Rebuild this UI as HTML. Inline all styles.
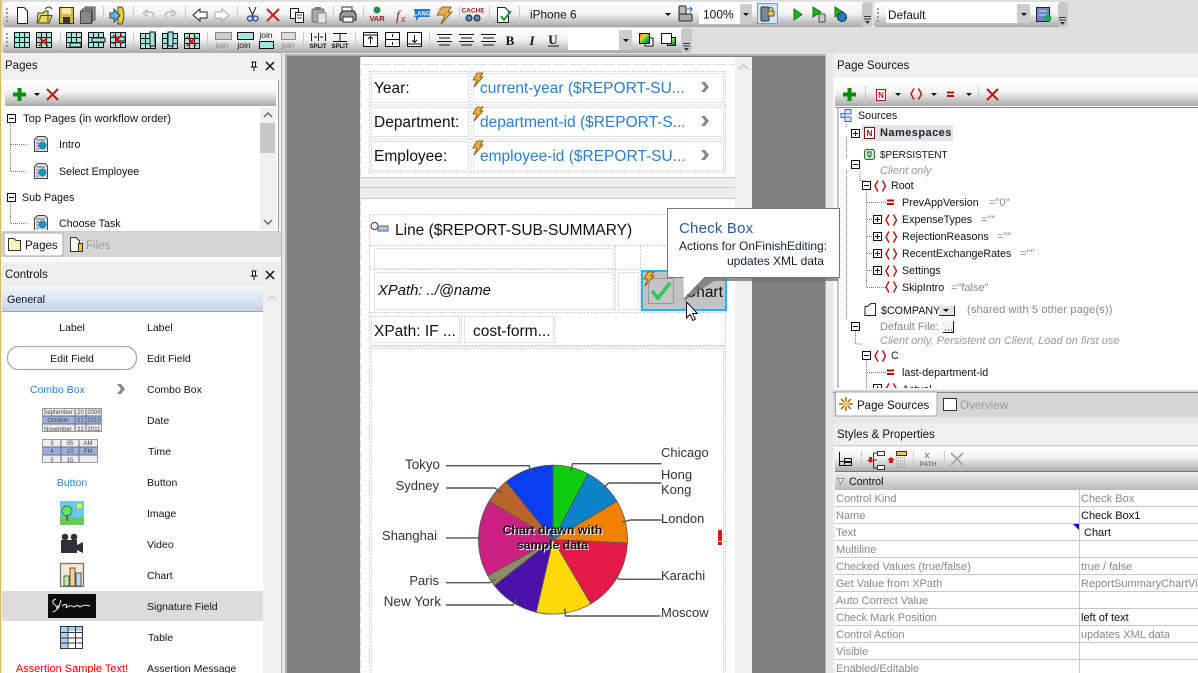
<!DOCTYPE html>
<html><head><meta charset="utf-8"><style>
html,body{margin:0;padding:0;width:1198px;height:673px;overflow:hidden;background:#dfdfdf}
svg{display:block;position:absolute;left:0;top:0}
text{font-family:"Liberation Sans",sans-serif;font-size:11px;fill:#111;white-space:pre}
.t{font-size:10.7px;fill:#112}
.h{font-size:11.5px;fill:#112}
.g{fill:#888}
.gi{fill:#999;font-style:italic}
.f{font-size:15.5px;fill:#111}
.b{font-size:15.5px;fill:#2a7fd0}
.c{font-size:13px;fill:#333}
.m{text-anchor:middle}
.e{text-anchor:end}
.s{font-size:8px;font-weight:bold;text-anchor:middle}
.p{fill:#888}
.l{font-size:10.5px;fill:#112}
.w{font-size:6px;fill:#444;text-anchor:middle}
</style></head><body>
<svg width="1198" height="673" viewBox="0 0 1198 673" xmlns="http://www.w3.org/2000/svg">
<defs>
<linearGradient id="tg" x1="0" y1="0" x2="0" y2="1"><stop offset="0" stop-color="#fff"/><stop offset=".45" stop-color="#f4f4f4"/><stop offset="1" stop-color="#a8a8a8"/></linearGradient>
<linearGradient id="hg" x1="0" y1="0" x2="0" y2="1"><stop offset="0" stop-color="#fff"/><stop offset=".4" stop-color="#f5f5f5"/><stop offset="1" stop-color="#aaa"/></linearGradient>
<linearGradient id="gen" x1="0" y1="0" x2="0" y2="1"><stop offset="0" stop-color="#f2f6fa"/><stop offset="1" stop-color="#c4d4e6"/></linearGradient>
<linearGradient id="cg" x1="0" y1="0" x2="0" y2="1"><stop offset="0" stop-color="#eee"/><stop offset="1" stop-color="#bbb"/></linearGradient>
<linearGradient id="rb" x1="0" y1="0" x2="1" y2="1"><stop offset="0" stop-color="#f03030"/><stop offset=".33" stop-color="#f0e020"/><stop offset=".66" stop-color="#20c040"/><stop offset="1" stop-color="#2040f0"/></linearGradient>
<g id="tb"><rect x=".5" y=".5" width="15" height="15" fill="#9fe8e0" stroke="#111"/><path d="M.5 5.5H15.5M.5 10.5H15.5M5.5 .5V15.5M10.5 .5V15.5" stroke="#111" fill="none"/></g>
<g id="xs"><path d="M0 0L9 9M9 0L0 9" stroke="#d01010" stroke-width="1.6" fill="none"/></g>
<g id="xb"><path d="M1 1L12 12M12 1L1 12" stroke="#b81818" stroke-width="2" fill="none"/></g>
<g id="pl"><path d="M6.5 0V13M0 6.5H13" stroke="#0c8c0c" stroke-width="4" fill="none"/></g>
<g id="bp"><rect x=".5" y=".5" width="8" height="8" fill="#fff" stroke="#111"/><path d="M2 4.5H7M4.5 2V7" stroke="#111"/></g>
<g id="bm"><rect x=".5" y=".5" width="8" height="8" fill="#fff" stroke="#111"/><path d="M2 4.5H7" stroke="#111"/></g>
<g id="br"><path d="M4 .5L1 6L4 11.5M8.5 .5L11.5 6L8.5 11.5" stroke="#c01818" stroke-width="1.5" fill="none"/></g>
<g id="eq"><path d="M0 1.5H7M0 5H7" stroke="#b80808" stroke-width="2"/></g>
<g id="dn"><path d="M0 0H6L3 3Z" fill="#111"/></g>
<g id="pg"><path d="M3.5 .5H11L13.500 3V15.500H.5V3.500Z" fill="#e0e0e0" stroke="#444"/><path d="M2.500 4H11M2.500 7H5M2.500 10H5M2.500 13H5" stroke="#666"/><circle cx="8.500" cy="9.500" r="4" fill="#1a8ac8"/><path d="M8 7L10 9L8 12" stroke="#0b5" fill="none"/></g>
<g id="bolt"><path d="M5 0L11 0L8 4L11 4L2 14L5 7L1 7Z" fill="#f0b040" stroke="#7a4a10" stroke-width=".8"/></g>
<g id="chev"><path d="M0 0L4 0L8 5L4 10L0 10L4 5Z" fill="#888"/></g>
<g id="grip"><path d="M0 .5H7M0 3H7" stroke="#333"/><path d="M1 5H6L3.5 8Z" fill="#333"/></g>
<g id="lin"><path d="M0 .5H15M2 4H13M0 7.5H15M2 11H13" stroke="#111" fill="none"/></g>
</defs>

<rect width="1198" height="673" fill="#dfdfdf"/>
<rect x="0" y="0" width="1" height="673" fill="#e3b263"/>

<!-- toolbars -->
<rect x="3" y="2" width="869" height="25" rx="3" fill="url(#tg)"/>
<rect x="3" y="28" width="689" height="25" rx="3" fill="url(#tg)"/>
<rect x="874" y="2" width="194" height="25" rx="3" fill="url(#tg)"/>
<rect x="862" y="2" width="10" height="25" rx="3" fill="#c8c8c8"/>
<rect x="681" y="28" width="11" height="25" rx="3" fill="#c8c8c8"/>
<rect x="1058" y="2" width="10" height="25" rx="3" fill="#c8c8c8"/>
<path d="M7 8v2M7 12v2M7 16v2M7 20v2M7 33v2M7 37v2M7 41v2M7 45v2M878 8v2M878 12v2M878 16v2M878 20v2" stroke="#999" stroke-width="2"/>
<use href="#grip" x="864" y="16"/><use href="#grip" x="683" y="43"/><use href="#grip" x="1059" y="17"/>
<path d="M103.500 6V24M133.500 6V24M185.500 6V24M237.500 6V24M333.500 6V24M363.500 6V24M459.500 6V24M489.500 6V24M519.500 6V24M60.500 32V50M133.500 32V50M207.500 32V50M303.500 32V50M355.500 32V50M429.500 32V50" stroke="#c8c8c8"/>

<!-- row 1 icons -->
<path d="M17.500 7.500H24L27.500 11V23.500H17.500Z" fill="#fff" stroke="#222"/>
<path d="M37 23L38 13H43L45 11H48V23Z M38 23L41 15.500H52L49 23Z" fill="#e8d860" stroke="#443"/><path d="M45 9Q49 5 52 9" stroke="#333" fill="none"/>
<rect x="59.500" y="7.500" width="14" height="16" fill="#d8b840" stroke="#333"/><rect x="62" y="8" width="9" height="6" fill="#f6e8a0"/><rect x="63" y="17" width="7" height="6" fill="#333"/>
<rect x="85" y="7" width="10" height="13" fill="#999" stroke="#555"/><rect x="82.500" y="9" width="10" height="13" fill="#aaa" stroke="#555"/><rect x="80.500" y="11" width="11" height="12.500" fill="#888" stroke="#444"/>
<path d="M118 7H122Q126 14 122 24H118Z" fill="#f0d020" stroke="#444"/><path d="M110 13H114V9L120 15.500L114 22V18H110Z" fill="#60b8f0" stroke="#245"/>
<path d="M143 13L147 10V12H151Q155 13 153 18M143 13L147 16V14" stroke="#bbb" stroke-width="1.500" fill="none"/><path d="M176 13L172 10V12H168Q164 13 166 18M176 13L172 16V14" stroke="#bbb" stroke-width="1.500" fill="none"/>
<path d="M193 15L200 9V12H207V18H200V21Z" fill="#fff" stroke="#222"/><path d="M229 15L222 9V12H215V18H222V21Z" fill="#fff" stroke="#aaa"/>
<path d="M249 7L253 16M256 7L252 16" stroke="#222"/><circle cx="250" cy="18.500" r="2.500" fill="none" stroke="#2244aa" stroke-width="1.300"/><circle cx="255.500" cy="18.500" r="2.500" fill="none" stroke="#2244aa" stroke-width="1.300"/>
<path d="M267 9L279 21M279 9L267 21" stroke="#c82020" stroke-width="2"/>
<rect x="290.500" y="8.500" width="8" height="10" fill="#fff" stroke="#123"/><rect x="295.500" y="12.500" width="8" height="10" fill="#fff" stroke="#123"/><path d="M297 15H302M297 18H302" stroke="#124a90"/>
<rect x="312" y="9" width="12" height="13" rx="1.500" fill="#a8a8a8" stroke="#666"/><rect x="318" y="13" width="8" height="10" fill="#e6e6e6" stroke="#888"/><rect x="315" y="7" width="6" height="3" fill="#777"/>
<rect x="342" y="7" width="10" height="6" fill="#fff" stroke="#333"/><path d="M340 14L343 11H354L356 14V20H340Z" fill="#999" stroke="#222"/><rect x="343" y="17" width="10" height="5" fill="#fff" stroke="#333"/>
<circle cx="377" cy="10" r="3.500" fill="#2c8c48"/><text x="377" y="21" class="s" style="fill:#a01818;font-size:7.500px">VAR</text>
<text x="396" y="20" style="font-family:'Liberation Serif',serif;font-style:italic;font-size:14px;fill:#a01818">f</text><text x="401" y="22" style="font-size:9px;fill:#c02020">x</text>
<path d="M414 9H430V17H419L416 21V17H414Z" fill="#1c78d0"/><text x="422" y="15.500" class="s" style="fill:#fff;font-size:6px">LANG</text>
<path d="M442 7L451 7L448 12L452 12L441 24L445 15L437 15Z" fill="#eab050" stroke="#8a6030"/><path d="M437 9L441 7L439 12Z" fill="#d0d0d0"/>
<text x="473" y="12.500" class="s" style="fill:#a02020;font-size:6.500px">CACHE</text><circle cx="469" cy="18" r="3" fill="#5a88c8" stroke="#222"/><circle cx="477" cy="18" r="3" fill="#5a88c8" stroke="#222"/>
<path d="M497.500 7.500H505L508.500 11V22.500H497.500Z" fill="#fff" stroke="#222"/><path d="M501 16L504 20L511 11" stroke="#18a030" stroke-width="2" fill="none"/>
<text x="530" y="18.500" style="font-size:11.800px;fill:#112">iPhone 6</text><use href="#dn" x="665" y="13"/>
<rect x="679" y="6" width="7" height="9" rx="1" fill="#bbb" stroke="#222"/><rect x="679" y="14" width="13" height="7" rx="1" fill="#aaa" stroke="#222"/><path d="M687 9H692L690 7M692 9L690 12" stroke="#2060d0" fill="none"/>
<rect x="699" y="4" width="53" height="20" fill="#fff"/><rect x="740" y="4" width="12" height="20" fill="#ccc"/>
<text x="703" y="18.500" style="font-size:12px;fill:#112">100%</text><use href="#dn" x="743" y="13"/>
<rect x="757.500" y="3.500" width="20" height="20" fill="#cfe4fa" stroke="#5aa0e8"/><rect x="761" y="7" width="8" height="14" rx="1.500" fill="#789" stroke="#234"/><rect x="768" y="11" width="6" height="5" fill="#eec040" stroke="#654"/><path d="M769 11V9Q771 6 773 9V11" stroke="#654" fill="none"/>
<path d="M794 9L802 14.500L794 20Z" fill="#20b020" stroke="#0a7a0a"/>
<path d="M813 7L821 12L813 17Z" fill="#20b020" stroke="#0a7a0a"/><rect x="819" y="14" width="6" height="8" rx="1" fill="#ccc" stroke="#444"/>
<path d="M835 7L843 12L835 17Z" fill="#20b020" stroke="#0a7a0a"/><circle cx="842" cy="17" r="4.500" fill="#1a80c0" stroke="#124"/>
<rect x="886" y="4" width="144" height="19" fill="#fff"/><rect x="1017" y="4" width="13" height="19" fill="#ccc"/>
<text x="888" y="19" style="font-size:11.800px;fill:#112">Default</text><use href="#dn" x="1021" y="13"/>
<rect x="1036.500" y="7.500" width="13" height="14" fill="#6888c0" stroke="#223"/><path d="M1039 11H1047M1039 15H1047" stroke="#dde"/><circle cx="1048" cy="18" r="3.500" fill="#20a050"/>

<!-- row 2 icons -->
<use href="#tb" x="14" y="32"/><use href="#tb" x="36" y="32"/><use href="#xs" x="39" y="37"/>
<use href="#tb" x="66" y="32"/><rect x="70" y="43" width="11" height="4" fill="#9fe8e0" stroke="#111"/>
<use href="#tb" x="88" y="32"/><rect x="92" y="38" width="13" height="4" fill="#9fe8e0" stroke="#111"/>
<use href="#tb" x="110" y="32"/><rect x="116" y="37" width="9" height="4" fill="#9fe8e0" stroke="#111"/><use href="#xs" x="113" y="35"/>
<use href="#tb" x="140" y="33"/><rect x="150" y="32" width="5" height="14" fill="#9fe8e0" stroke="#111"/>
<use href="#tb" x="162" y="33"/><rect x="168" y="32" width="5" height="14" fill="#9fe8e0" stroke="#111"/>
<use href="#tb" x="184" y="33"/><use href="#xs" x="187" y="37"/>
<rect x="215.500" y="32.500" width="16" height="7" fill="#ccc" stroke="#888"/><text x="222" y="48" class="m" style="font-size:8.500px;fill:#888">join</text>
<rect x="237.500" y="32.500" width="16" height="7" fill="#9fe8e0" stroke="#111"/><text x="244" y="48" class="m" style="font-size:8.500px">join</text>
<rect x="259.500" y="41.500" width="14" height="7" fill="#9fe8e0" stroke="#111"/><text x="266" y="38" class="m" style="font-size:8.500px">join</text>
<rect x="281.500" y="32.500" width="14" height="7" fill="#ddd" stroke="#888"/><text x="288" y="48" class="m" style="font-size:8.500px;fill:#888">join</text>
<path d="M311.500 33V41M325.500 33V41M318.500 33V41M314 37H317M320 37H323" stroke="#111"/><text x="318" y="48" class="s" style="font-size:6px">SPLIT</text>
<path d="M333 33.500H347M333 41.500H347M340 33V41" stroke="#111"/><text x="340" y="48" class="s" style="font-size:6px">SPLIT</text>
<rect x="363.500" y="32.500" width="14" height="14" fill="#fff" stroke="#111"/><path d="M364 35H377M370.500 44V37M368 39L370.500 36.500L373 39" stroke="#111" fill="none"/>
<rect x="385.500" y="32.500" width="14" height="14" fill="#fff" stroke="#111"/><path d="M386 39.500H399M392.500 34V37M392.500 42V45" stroke="#111"/>
<rect x="407.500" y="32.500" width="14" height="14" fill="#fff" stroke="#111"/><path d="M408 44H421M414.500 35V42M412 40L414.500 42.500L417 40" stroke="#111" fill="none"/>
<use href="#lin" x="437" y="34"/><use href="#lin" x="459" y="34"/><use href="#lin" x="481" y="34"/>
<text x="510" y="45" class="m" style="font-family:'Liberation Serif',serif;font-weight:bold;font-size:13px">B</text>
<text x="532" y="45" class="m" style="font-family:'Liberation Serif',serif;font-weight:bold;font-style:italic;font-size:13px">I</text>
<text x="553" y="44" class="m" style="font-family:'Liberation Serif',serif;font-weight:bold;font-size:13px">U</text><path d="M548 46H559" stroke="#111"/>
<rect x="568" y="30" width="64" height="20" fill="#fff"/><rect x="619" y="30" width="13" height="20" fill="#ccc"/><use href="#dn" x="623" y="39"/>
<rect x="645" y="38" width="8" height="8" fill="#fff" stroke="#111"/><rect x="639.500" y="33.500" width="10" height="10" fill="url(#rb)" stroke="#111"/>
<rect x="667.500" y="37.500" width="8" height="8" fill="url(#rb)" stroke="#111"/><rect x="661.500" y="33.500" width="10" height="10" fill="#fff" stroke="#111"/>

<!-- Left panel -->
<rect x="1" y="53" width="280" height="620" fill="#f0f0f0"/>
<path d="M281.500 54V673" stroke="#bbb"/>
<text x="5" y="69" class="h">Pages</text>
<path d="M251.500 62H256.500M252.500 62V67H255.500V62M254 67V71M250.500 67H257.500" stroke="#111" fill="none"/>
<path d="M266 62L274 70M274 62L266 70" stroke="#111" stroke-width="1.500"/>
<rect x="2" y="80" width="277" height="153" fill="#fff"/>
<path d="M278.500 80V232H2" stroke="#999" fill="none"/>
<rect x="5" y="82" width="271" height="24" fill="url(#hg)"/>
<use href="#pl" x="13" y="88"/><use href="#dn" x="34" y="93"/><use href="#xb" x="46" y="88"/>
<rect x="260" y="107" width="16" height="123" fill="#f0f0f0"/><rect x="260" y="123" width="15" height="30" fill="#c8c8c8"/>
<path d="M264 117L268 113L272 117M264 220L268 224L272 220" stroke="#666" stroke-width="1.500" fill="none"/>
<use href="#bm" x="7" y="114"/><text x="23" y="122" style="font-size:11.200px;fill:#112">Top Pages (in workflow order)</text>
<path d="M10.500 124V171.500H27M11 144.500H27M10.500 202V223.500H27" stroke="#777" stroke-dasharray="1 1" fill="none"/>
<use href="#pg" x="34" y="136"/><text x="59" y="148" class="t">Intro</text>
<use href="#pg" x="34" y="163"/><text x="59" y="175" class="t">Select Employee</text>
<use href="#bm" x="7" y="193"/><text x="22" y="201" class="t">Sub Pages</text>
<svg x="0" y="100" width="259" height="130"><use href="#pg" x="34" y="115"/></svg>
<text x="59" y="227" class="t">Choose Task</text>
<rect x="1" y="232" width="280" height="25" fill="#d6d6d6"/>
<path d="M4 233H63V253Q63 256 60 256H7Q4 256 4 253Z" fill="#fff" stroke="#aaa"/>
<path d="M8.500 238.500H14L16 240.500H20.500V250.500H8.500Z" fill="#fdf6c0" stroke="#333"/>
<text x="25" y="249" class="h">Pages</text>
<path d="M70.500 237.500H76L79.500 241V251.500H70.500Z" fill="#fff" stroke="#333"/><rect x="78.500" y="243.500" width="4" height="8" fill="#f0c040" stroke="#333"/>
<text x="86" y="249" class="h" style="fill:#999">Files</text>
<rect x="1" y="257" width="280" height="5" fill="#fafafa"/>
<rect x="1" y="262" width="280" height="24" fill="#efefef"/>
<text x="5" y="278" class="h">Controls</text>
<path d="M251.500 271H256.500M252.500 271V276H255.500V271M254 276V280M250.500 276H257.500" stroke="#111" fill="none"/>
<path d="M266 271L274 279M274 271L266 279" stroke="#111" stroke-width="1.500"/>
<rect x="2" y="287" width="261" height="25" fill="url(#gen)"/><path d="M2 311.500H263" stroke="#9aa4b0"/>
<text x="7" y="303" class="t">General</text>
<rect x="2" y="312" width="261" height="361" fill="#fff"/>
<rect x="263" y="287" width="17" height="386" fill="#f0f0f0"/>
<path d="M268 300L272 296L276 300" stroke="#ccc" stroke-width="1.500" fill="none"/>
<rect x="2" y="591" width="261" height="30" fill="#dcdcdc"/>
<text x="72" y="331" class="m l">Label</text><text x="147" y="331" class="l">Label</text>
<rect x="7.500" y="346.500" width="129" height="23" rx="11" fill="#fff" stroke="#aaa" stroke-width="1.300"/><text x="72" y="362" class="m l">Edit Field</text><text x="147" y="362" class="l">Edit Field</text>
<text x="30" y="393" class="l" style="fill:#2a7fd0">Combo Box</text><use href="#chev" x="117" y="384"/><text x="147" y="393" class="l">Combo Box</text>
<rect x="42.500" y="408.500" width="59" height="23" fill="#eee" stroke="#999"/><rect x="43" y="416" width="58" height="8" fill="#9cb0dc"/><path d="M43 416H101M43 424H101M75 409V431M86 409V431" stroke="#668"/>
<text x="58" y="414" class="w">September</text><text x="58" y="422" class="w">October</text><text x="58" y="431" class="w">November</text><text x="80.500" y="414" class="w">20</text><text x="80.500" y="422" class="w">21</text><text x="80.500" y="431" class="w">22</text><text x="94" y="414" class="w">2009</text><text x="94" y="422" class="w">2010</text><text x="94" y="431" class="w">2011</text>
<text x="147" y="424" class="l">Date</text>
<rect x="42.500" y="439.500" width="55" height="23" fill="#eee" stroke="#999"/><rect x="43" y="447" width="54" height="8" fill="#9cb0dc"/><path d="M43 447H97M43 455H97M61 440V462M79 440V462" stroke="#668"/>
<text x="52" y="445" class="w">3</text><text x="52" y="453" class="w">4</text><text x="52" y="462" class="w">5</text><text x="70" y="445" class="w">05</text><text x="70" y="453" class="w">10</text><text x="70" y="462" class="w">15</text><text x="88" y="445" class="w">AM</text><text x="88" y="453" class="w">PM</text>
<text x="148" y="455" class="l">Time</text>
<text x="72" y="486" class="m l" style="fill:#2a7fd0">Button</text><text x="147" y="486" class="l">Button</text>
<rect x="60" y="501" width="24" height="24" fill="#6cc8ec"/><rect x="60" y="517" width="24" height="8" fill="#66cc55"/><circle cx="79.500" cy="506" r="2.500" fill="#ff0"/><circle cx="67" cy="511" r="5" fill="#6ce060" stroke="#284"/><rect x="66.500" y="515" width="1.500" height="6" fill="#840"/><text x="147" y="517" class="l">Image</text>
<circle cx="65" cy="537" r="3.300" fill="#2c3038"/><circle cx="74" cy="537" r="3.300" fill="#2c3038"/><rect x="61" y="540" width="16" height="13" fill="#2c3038"/><path d="M77 545L83 542V553L77 550Z" fill="#2c3038"/><text x="147" y="548" class="l">Video</text>
<rect x="60.500" y="563.500" width="23" height="23" fill="#fbe8d0" stroke="#777" stroke-width="1.300"/><rect x="64" y="576" width="5" height="10" fill="#bff0a8" stroke="#555"/><rect x="70" y="568" width="5" height="18" fill="#fcd090" stroke="#555"/><rect x="76" y="573" width="5" height="13" fill="#b8d8f8" stroke="#555"/><text x="147" y="579" class="l">Chart</text>
<rect x="48" y="594" width="48" height="24" fill="#0c0c0c"/><path d="M56 599Q50 601 55 605Q60 609 53 612M58 605Q57 614 61 600M62 606Q68 602 66 608Q70 604 74 607Q78 604 80 607Q84 604 90 606" stroke="#eee" fill="none"/><text x="147" y="610" class="l">Signature Field</text>
<rect x="60.500" y="626.500" width="22" height="22" fill="#fff" stroke="#333"/><rect x="61" y="627" width="6" height="21" fill="#a8d0f4"/><rect x="61" y="627" width="21" height="4" fill="#a8d0f4"/><path d="M60 632.500H83M60 638H83M60 643H83M68 627V649M75.500 627V649" stroke="#333"/><text x="148" y="641" class="l">Table</text>
<text x="72" y="672" class="m" style="fill:#f00;font-size:11px">Assertion Sample Text!</text><text x="147" y="672" class="l">Assertion Message</text>

<!-- Centre -->
<rect x="283" y="53" width="550" height="620" fill="#e8e8e8"/>
<rect x="285" y="54" width="541" height="619" fill="#b0b0b0"/>
<rect x="287" y="56" width="538" height="617" fill="#808080"/>
<rect x="360" y="57" width="375" height="616" fill="#fff"/>
<rect x="735" y="57" width="17" height="616" fill="#f0f0f0"/>
<path d="M739 69L743.500 65L748 69" stroke="#ccc" stroke-width="2" fill="none"/>
<rect x="360" y="177" width="375" height="21" fill="#eeeef0"/><path d="M360 177.500H735M360 187.500H735M360 198.500H735" stroke="#ccc"/><path d="M360.500 57V177M360.500 198V673" stroke="#ddd" stroke-dasharray="8 3"/>
<path d="M362 64.500H735" stroke="#ddd" stroke-dasharray="12 4"/>
<g fill="none" stroke="#ccc" stroke-dasharray="2 1.500">
<rect x="369.500" y="71.500" width="356" height="101"/>
<path d="M370 105H725M370 139H725M471 72V172"/>
<rect x="369.500" y="214.500" width="356" height="131" />
<path d="M370 245.500H725M370 269.500H640M615.500 246V310M640.500 246V310M370 312.500H725M461.500 316V344M555 316V344"/>
<rect x="369.500" y="346.500" width="356" height="340"/>
</g>
<g fill="none" stroke="#e2e2e2">
<rect x="371.500" y="73.500" width="97" height="29"/><rect x="473.500" y="73.500" width="250" height="29"/>
<rect x="371.500" y="107.500" width="97" height="29"/><rect x="473.500" y="107.500" width="250" height="29"/>
<rect x="371.500" y="141.500" width="97" height="29"/><rect x="473.500" y="141.500" width="250" height="29"/>
<rect x="374.500" y="248.500" width="239" height="20"/><rect x="374.500" y="272.500" width="239" height="37"/><rect x="618.500" y="272.500" width="20" height="37"/>
<rect x="371.500" y="316.500" width="88" height="26"/><rect x="464.500" y="316.500" width="89" height="26"/><rect x="371.500" y="348.500" width="352" height="330"/>
</g>
<text x="374" y="93" class="f">Year:</text><text x="374" y="127" class="f">Department:</text><text x="374" y="161" class="f">Employee:</text>
<text x="480" y="93" class="b">current-year ($REPORT-SU...</text>
<text x="480" y="127" class="b">department-id ($REPORT-S...</text>
<text x="480" y="161" class="b">employee-id ($REPORT-SU...</text>
<use href="#bolt" x="472" y="73"/><use href="#bolt" x="472" y="107"/><use href="#bolt" x="472" y="141"/>
<use href="#chev" x="701" y="82"/><use href="#chev" x="701" y="116"/><use href="#chev" x="701" y="150"/>
<circle cx="374.500" cy="226" r="3.500" fill="#fff" stroke="#333"/><rect x="378" y="226" width="10" height="5" fill="#a8c8f0" stroke="#666"/>
<text x="395" y="235" class="f">Line ($REPORT-SUB-SUMMARY)</text>
<text x="378" y="295" class="f" style="font-style:italic;font-size:14.800px">XPath: ../@name</text>
<text x="374" y="336" class="f">XPath: IF ...</text><text x="473" y="336" class="f">cost-form...</text>

<!-- check box -->
<rect x="642" y="271" width="84" height="39" fill="#c2c2c2" stroke="#1db8e8" stroke-width="2"/>
<rect x="648.500" y="278.500" width="25" height="25" fill="#c4c4c4" stroke="#999"/>
<path d="M652 291L658 298L670 283" stroke="#2cc858" stroke-width="3.500" fill="none"/>
<text x="685" y="297" class="f">Chart</text>
<use href="#bolt" x="643" y="272"/>

<!-- pie -->
<g transform="translate(-1 0)">
<g stroke="#555" stroke-width=".8">
<path d="M554 539.600L554 465.100A74.500 74.500 0 0 1 589 473.800Z" fill="#0ccc0c"/>
<path d="M554 539.600L589 473.800A74.500 74.500 0 0 1 617.900 501.200Z" fill="#0a83c8"/>
<path d="M554 539.600L617.900 501.200A74.500 74.500 0 0 1 628.400 543Z" fill="#f08000"/>
<path d="M554 539.600L628.400 543A74.500 74.500 0 0 1 591.800 603.800Z" fill="#e51a48"/>
<path d="M554 539.600L591.800 603.800A74.500 74.500 0 0 1 537.200 612.200Z" fill="#ffd80a"/>
<path d="M554 539.600L537.200 612.200A74.500 74.500 0 0 1 495.300 585.500Z" fill="#4a12a8"/>
<path d="M554 539.600L495.300 585.500A74.500 74.500 0 0 1 488.800 575.700Z" fill="#8c8a6a"/>
<path d="M554 539.600L488.800 575.700A74.500 74.500 0 0 1 490.100 501.200Z" fill="#cc2080"/>
<path d="M554 539.600L490.100 501.200A74.500 74.500 0 0 1 507.100 481.700Z" fill="#b8642c"/>
<path d="M554 539.600L507.100 481.700A74.500 74.500 0 0 1 554 465.100Z" fill="#0a3cf0"/>
</g>
</g>
<g fill="none" stroke="#555" stroke-width="1.400">
<path d="M446 465.700H529L531 473"/><path d="M661.500 463.700H572.600L571 471"/><path d="M661.500 483H608.600L602.600 489"/><path d="M661.500 520H631L622 522"/><path d="M661.500 579.300H619.400L614 576"/><path d="M660.500 616H565.500L564.800 608.600"/><path d="M446 488H494.700L501.400 493"/><path d="M446 537.900H484"/><path d="M446 582.700H489.600L495.400 579.300"/><path d="M446 605H513L517 598.500"/>
</g>
<text x="440" y="469" class="e c" style="font-size:13.400px">Tokyo</text><text x="439" y="490" class="e c">Sydney</text><text x="437" y="540" class="e c">Shanghai</text><text x="439" y="585" class="e c">Paris</text><text x="441" y="606" class="e c" style="font-size:13.600px">New York</text>
<text x="661" y="457" class="c">Chicago</text><text x="661" y="479" class="c">Hong</text><text x="661" y="494" class="c">Kong</text><text x="661" y="523" class="c">London</text><text x="661" y="580" class="c">Karachi</text><text x="661" y="617" class="c">Moscow</text>
<text x="552.500" y="534" class="m" style="font-weight:bold;font-size:12.300px;fill:#fff" transform="translate(1 1)">Chart drawn with</text>
<text x="552.500" y="549" class="m" style="font-weight:bold;font-size:12.300px;fill:#fff" transform="translate(1 1)">sample data</text>
<text x="552.500" y="534" class="m" style="font-weight:bold;font-size:12.300px;fill:#111">Chart drawn with</text>
<text x="552.500" y="549" class="m" style="font-weight:bold;font-size:12.300px;fill:#111">sample data</text>
<rect x="718" y="530" width="4" height="11" rx="1" fill="#e01010"/><rect x="718" y="542" width="4" height="3" fill="#e01010"/>

<!-- Right panel -->
<rect x="833" y="53" width="365" height="620" fill="#f0f0f0"/>
<text x="837" y="69" class="h">Page Sources</text>
<rect x="834" y="78" width="364" height="314" fill="#fff"/>
<rect x="835" y="82" width="363" height="24" fill="url(#hg)"/><path d="M835 107.500H1198M838 107V392" stroke="#888"/>
<use href="#pl" x="843" y="88"/>
<rect x="876.500" y="89.500" width="9" height="11" fill="#fff" stroke="#b01818"/><text x="881" y="98" class="s" style="fill:#b01818">N</text><use href="#dn" x="895" y="93"/>
<use href="#br" x="910" y="88"/><use href="#dn" x="931" y="93"/>
<use href="#eq" x="947" y="91"/><use href="#dn" x="966" y="93"/>
<use href="#xb" x="986" y="88"/>
<path d="M865.500 86V104M978.500 86V104" stroke="#ccc"/>
<path d="M845 109.500H851V114H845ZM845 117H851V121.500H845ZM841 113.500H845V117.500H841Z" fill="#dde6ff" stroke="#4466dd"/>
<text x="858" y="119" class="t">Sources</text>
<path d="M846.500 124V128M846.500 137V159M846.500 170V320M860 172V180.500H866M866.500 190V287.500H886M867 202.500H886M867 219.500H872M867 236.500H872M867 253.500H872M867 270.500H872M855.500 331V344H862M866.500 361V388M867 372.500H886" stroke="#777" stroke-dasharray="1 1" fill="none"/>
<use href="#bp" x="851" y="129"/><rect x="862" y="125" width="91" height="16" fill="#e4e4e4"/>
<rect x="864.500" y="127.500" width="10" height="11" fill="#fff" stroke="#7a1010"/><text x="869.500" y="136" class="s" style="fill:#7a1010">N</text>
<text x="880" y="136" style="font-weight:bold;fill:#223;letter-spacing:.45px">Namespaces</text>
<rect x="864.500" y="149.500" width="10" height="10" rx="2" fill="#cfe8cf" stroke="#2a6a2a"/><path d="M867 152H872M868 152V156H871V152M869.500 156V158" stroke="#2a6a2a" fill="none"/>
<text x="880" y="158" style="font-size:9.900px;fill:#112">$PERSISTENT</text>
<use href="#bm" x="851" y="160"/><text x="880" y="174" class="gi">Client only</text>
<use href="#bm" x="862" y="181"/><use href="#br" x="874" y="180"/><text x="891" y="189" class="t">Root</text>
<use href="#eq" x="887" y="199"/><text x="902" y="206" class="t">PrevAppVersion</text><text x="989" y="206" class="g">="0"</text>
<use href="#bp" x="873" y="215"/><use href="#br" x="885" y="214"/><text x="902" y="223" class="t">ExpenseTypes</text><text x="981" y="223" class="g">=""</text>
<use href="#bp" x="873" y="232"/><use href="#br" x="885" y="231"/><text x="902" y="240" class="t">RejectionReasons</text><text x="997" y="240" class="g">=""</text>
<use href="#bp" x="873" y="249"/><use href="#br" x="885" y="248"/><text x="902" y="257" class="t">RecentExchangeRates</text><text x="1020" y="257" class="g">=""</text>
<use href="#bp" x="873" y="266"/><use href="#br" x="885" y="265"/><text x="902" y="274" class="t">Settings</text>
<use href="#br" x="885" y="281"/><text x="902" y="291" class="t">SkipIntro</text><text x="951" y="291" class="g">="false"</text>
<path d="M867.500 306.500L871 303.500H875.500V315.500H865V306.500Z" fill="#fff" stroke="#222"/>
<text x="881" y="314" class="t">$COMPANY</text>
<rect x="939" y="306" width="15" height="9" fill="#e4e4e4"/><use href="#dn" x="943" y="309"/><path d="M939 315.500H954M954.500 306V316" stroke="#222"/>
<text x="967" y="313" class="g" style="letter-spacing:.15px">(shared with 5 other page(s))</text>
<use href="#bm" x="851" y="322"/><text x="880" y="330" class="g">Default File:</text>
<rect x="942" y="321" width="12" height="12" fill="#f4f4f4"/><path d="M943 332.500H954M953.500 321V333M945 330H946M948 330H949M951 330H952" stroke="#111"/>
<text x="880" y="344" class="gi">Client only, Persistent on Client, Load on first use</text>
<use href="#bm" x="862" y="351"/><use href="#br" x="874" y="350"/><text x="891" y="359" class="t">C</text>
<use href="#eq" x="887" y="369"/><text x="902" y="376" class="t">last-department-id</text>
<svg x="834" y="378" width="364" height="10"><use href="#bp" x="39" y="6"/><use href="#br" x="51" y="5"/><text x="68" y="15" class="t">Actual</text></svg>
<rect x="834" y="388" width="364" height="2" fill="#fafafa"/>
<rect x="833" y="390" width="365" height="27" fill="#d6d6d6"/><path d="M833 392.500H1198" stroke="#888"/>
<path d="M835.500 392V413Q835.500 416 838.500 416H934Q937 416 937 413V392Z" fill="#fff" stroke="#aaa"/>
<path d="M846 397V411M839 404H853M841 399L851 409M851 399L841 409" stroke="#a06818" stroke-width="1.500"/><circle cx="846" cy="404" r="3" fill="#f0c860"/>
<text x="857" y="409" class="h">Page Sources</text>
<rect x="943.500" y="398.500" width="13" height="12" fill="#fff" stroke="#333"/>
<text x="960" y="409" class="h" style="fill:#999">Overview</text>
<rect x="833" y="417" width="365" height="7" fill="#e8e8e8"/>
<text x="837" y="438" class="h">Styles &amp; Properties</text>
<path d="M833 445.500H1198" stroke="#ccc"/>
<rect x="835" y="447" width="363" height="25" fill="url(#hg)"/>
<path d="M839.500 452V465.500H852M840 461.500H844M844.500 458.500H851.500V461.500H844.500ZM844.500 462.500H851.500V465.500H844.500Z" stroke="#111" fill="none"/>
<path d="M873.500 453H877M873.500 453V468H877M873.500 460H877" stroke="#333" fill="none"/><rect x="877.500" y="451.500" width="7" height="4" fill="#fff" stroke="#333"/><rect x="877.500" y="465.500" width="7" height="4" fill="#fff" stroke="#333"/><path d="M869 457H872V460H874L870.500 463L867 460H869Z" fill="#e01010"/>
<rect x="896.500" y="451.500" width="10" height="4" fill="#f0c060" stroke="#333"/><path d="M896 458H906M896 461H906M896 464H906M896 467H906" stroke="#888" stroke-dasharray="1 1"/><path d="M891 457L895 460H893V463H889V460H887Z" fill="#e01010"/>
<path d="M925 453L929 458M929 453L925 458" stroke="#777"/><text x="928" y="466" class="s" style="font-size:6.500px;fill:#777">PATH</text>
<path d="M951 453L963 465M963 453L951 465" stroke="#aaa" stroke-width="2"/>
<path d="M913.500 451V469M944.500 451V469M861.500 451V469" stroke="#ccc"/>
<rect x="835" y="472" width="363" height="18" fill="url(#cg)"/><path d="M835 471.500H1198" stroke="#777"/><path d="M835 489.500H1198" stroke="#bbb"/>
<path d="M837.500 478.500H843.500L840.500 484Z" fill="#fff" stroke="#888"/>
<text x="849" y="485" class="t">Control</text>
<rect x="835" y="490" width="363" height="183" fill="#fff"/>
<path d="M835 506.500H1198M835 523.500H1198M835 540.500H1198M835 557.500H1198M835 574.500H1198M835 591.500H1198M835 608.500H1198M835 625.500H1198M835 642.500H1198M835 659.500H1198M1079.500 490V673" stroke="#c8c8c8"/>
<path d="M1073 524H1079V530Z" fill="#0000e0"/>
<text x="836" y="502" class="p">Control Kind</text><text x="1081" y="502" class="p">Check Box</text>
<text x="836" y="519" class="p">Name</text><text x="1081" y="519" style="fill:#111">Check Box1</text>
<text x="836" y="536" class="p">Text</text><text x="1084" y="536" style="fill:#111">Chart</text>
<text x="836" y="553" class="p">Multiline</text>
<text x="836" y="570" class="p">Checked Values (true/false)</text><text x="1081" y="570" class="p">true / false</text>
<text x="836" y="587" class="p">Get Value from XPath</text><text x="1081" y="587" class="p">ReportSummaryChartVisible</text>
<text x="836" y="604" class="p">Auto Correct Value</text>
<text x="836" y="621" class="p">Check Mark Position</text><text x="1081" y="621" style="fill:#111">left of text</text>
<text x="836" y="638" class="p">Control Action</text><text x="1081" y="638" class="p">updates XML data</text>
<text x="836" y="655" class="p">Visible</text>
<text x="836" y="672" class="p">Enabled/Editable</text>

<!-- tooltip -->
<path d="M704 277L684 297V301L714 281H838V277Z" fill="#707070" opacity=".75"/>
<path d="M667.500 208.500H839.500V277.500H704L684 298L683.500 277.500H667.500Z" fill="#fff"/>
<path d="M683.500 277.500H667.500V208.500H839.500V277.500H704" fill="none" stroke="#767676"/>
<text x="679" y="233" style="font-size:15px;fill:#2a5a9a;letter-spacing:.2px">Check Box</text>
<text x="679" y="250" style="font-size:12px;fill:#123">Actions for OnFinishEditing:</text>
<text x="727" y="265" style="font-size:12px;fill:#123">updates XML data</text>
<path d="M686.500 302V318L690 314.500L693 320.500L695.500 319L692.500 313.500H697.500Z" fill="#fff" stroke="#111"/>
</svg>
</body></html>
